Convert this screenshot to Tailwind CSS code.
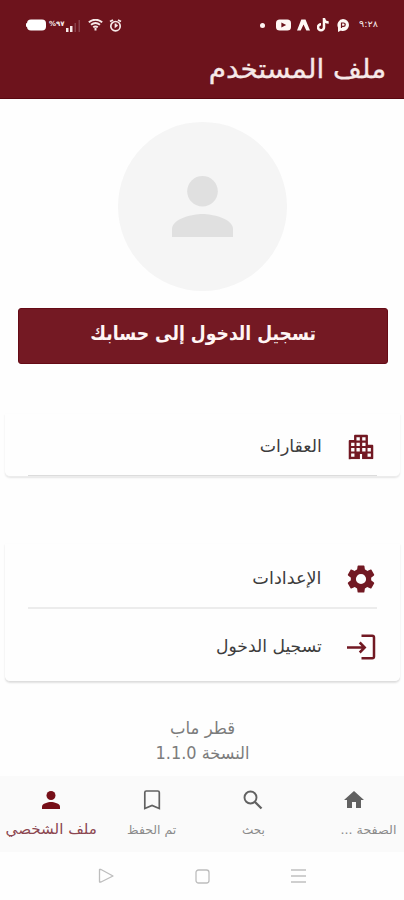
<!DOCTYPE html>
<html lang="ar" dir="rtl">
<head>
<meta charset="utf-8">
<title>ملف المستخدم</title>
<script src="https://cdn.jsdelivr.net/npm/@tailwindcss/browser@4"></script>
</head>
<body class="w-[404px] h-[900px] overflow-hidden bg-[#fefefe] font-['DejaVu_Sans',sans-serif] flex flex-col">
<header class="h-[99px] shrink-0 bg-[#6d131c] border-b border-[#5a0710] text-[#f6e9e8]">
  <div dir="ltr" class="h-[50px] flex items-center pl-[26px] pr-[25px]">
    <svg class="w-5 h-3" viewBox="0 0 20 12"><rect x="1" y="0.5" width="19" height="11" rx="4" fill="#fff"/><rect x="0" y="4" width="2" height="4" rx="1" fill="#fff"/></svg>
    <span class="ml-[3px] w-[15px] text-[7px] leading-none font-bold whitespace-nowrap -mt-px">%٩٧</span>
    <svg class="ml-[1px] mt-[2px] w-4 h-3" viewBox="0 0 16 12"><path d="M1 8h2.5v4H1zM5 6h2.500v6H5z" fill="#f6e9e8"/><path d="M9.500 3H11v9H9.500zM13.500 0H15v12h-1.500z" fill="#88404a"/></svg>
    <svg class="ml-[7px] w-[15px] h-3" viewBox="0 0 15 12" fill="none" stroke="#f6e9e8" stroke-width="1.900"><path d="M.8 3.200Q7.500-1.800 14.200 3.200M3 5.800q4.500-3.500 9 0M5.200 8.300q2.300-1.800 4.600 0"/><path d="M7.500 9v2.500" stroke-width="2"/></svg>
    <svg class="ml-[6px] w-[13px] h-[13px]" viewBox="0 0 13 13" fill="none" stroke="#f6e9e8" stroke-width="1.700"><circle cx="6.500" cy="7.200" r="4.700"/><path d="M1 2.600 4 .9M12 2.600 9 .9M6.500 4.500v3l2-1.500"/></svg>
    <i class="ml-auto w-[5px] h-[5px] rounded-full bg-[#fff4f2]"></i>
    <svg class="ml-[11px] w-[15px] h-[12px]" viewBox="0 0 14 12" preserveAspectRatio="none"><rect y=".5" width="14" height="11" rx="3.500" fill="#fff8f5"/><path d="M5 3.500 9.500 6 5 8.500z" fill="#6d131c"/></svg>
    <svg class="ml-[6px] w-[13px] h-[12px]" viewBox="0 0 13 12"><path d="M0 11.500 4.300.5h4.200L13 11.500H9.300L6.500 5.500 3.700 11.500z" fill="#fff8f5"/></svg>
    <svg class="ml-[7px] w-[12px] h-[14px]" viewBox="0 0 12 14" fill="none" stroke="#fff8f5" stroke-width="2.500"><path d="M7 0v9.300a3 3 0 1 1-3-3M7 1c.5 2.300 2 3.500 4.700 3.500"/></svg>
    <svg class="ml-[8px] w-[12px] h-[13px]" viewBox="0 0 12 13"><path d="M6 0a6 6 0 0 1 0 12c-1 0-1.500-.3-2-.6L1 13V8.500A6 6 0 0 1 6 0z" fill="#fff8f5"/><path d="M4.500 9V4h2a1.700 1.700 0 0 1 0 3.400h-2" fill="none" stroke="#6d131c" stroke-width="1.200"/></svg>
    <span class="ml-[10px] w-[20px] text-[9px] leading-none whitespace-nowrap -mt-px origin-left scale-x-[1.08]">٩:٢٨</span>
  </div>
  <h1 class="mr-[18px] h-[48px] leading-[40px] text-[25px] whitespace-nowrap"><span class="inline-block origin-right scale-x-[1.115] scale-y-[1.06] [-webkit-text-stroke:0.3px_#f6e9e8]">ملف المستخدم</span></h1>
</header>
<main class="h-[677px] shrink-0 flex flex-col items-center">
  <div class="mt-[23px] w-[169px] h-[169px] shrink-0 rounded-full bg-[#f5f5f5] flex justify-center">
    <svg class="mt-[54px] w-[61px] h-[61px]" viewBox="0 0 61 61" fill="#e0e0e0"><circle cx="30.500" cy="15.300" r="15.300"/><path d="M0 61V53C0 43 20 38 30.500 38S61 43 61 53v8z"/></svg>
  </div>
  <button class="mt-[17px] ml-px w-[370px] h-[56px] shrink-0 rounded-[3px] bg-[#741923] border border-[#650b16] text-[#fff5f4] font-bold text-[18px] leading-[50px] pb-1 whitespace-nowrap"><span class="inline-block translate-x-px scale-x-[0.955] scale-y-[1.08]">تسجيل الدخول إلى حسابك</span></button>
  <section class="mt-[50px] ml-px w-[395px] h-[63px] shrink-0 rounded-b-[5px] border-b border-[#ececec] shadow-[0_1px_2px_rgba(0,0,0,0.1)] bg-[#fefefe] flex flex-col px-[23px]">
    <div class="flex items-center h-[62px] border-b border-[#dcdcdc] pt-[5px]">
      <svg class="w-[32px] h-[32px]" viewBox="0 0 24 24"><path fill="#721923" stroke="#721923" stroke-width="1.400" stroke-linejoin="round" d="M16.500 11V3.500h-9v4h-4v17h0V20.500h7.500v-3.500h2v3.500h7.500V11z" /><path fill="#fefefe" d="M2 21.200h20V25H2zM11.200 17.300h1.600V22h-1.600zM8.600 4.700h2.500v2.500H8.600zM12.900 4.700h2.500v2.500h-2.500zM4.600 8.800h2.500v2.500H4.600zM8.600 8.800h2.500v2.500H8.600zM12.900 8.800h2.500v2.500h-2.500zM4.600 12.800h2.500v2.500H4.600zM8.600 12.800h2.500v2.500H8.600zM12.900 12.800h2.500v2.500h-2.500zM16.900 12.800h2.500v2.500h-2.500zM4.600 16.800h2.500v2.500H4.600zM16.900 16.800h2.500v2.500h-2.500z"/></svg>
      <span class="mr-[23px] text-[17px] text-[#3c3c3c] whitespace-nowrap origin-right scale-x-[1.02]">العقارات</span>
    </div>
  </section>
  <section class="mt-[67px] ml-px w-[395px] h-[138px] shrink-0 rounded-b-[5px] border-b border-[#dedede] shadow-[0_1px_2px_rgba(0,0,0,0.12)] bg-[#fefefe] flex flex-col px-[23px]">
    <div class="flex items-center h-[65px] border-b-2 border-[#ececec] pt-[7px]">
      <svg class="w-[34px] h-[34px] -mr-[1px]" viewBox="0 0 24 24" fill="#721923"><path d="M19.140 12.940c.04-.3.060-.61.060-.94 0-.32-.02-.64-.07-.94l2.030-1.580c.18-.14.230-.41.120-.61l-1.920-3.320c-.12-.22-.37-.29-.59-.22l-2.390.96c-.5-.38-1.030-.7-1.620-.94l-.36-2.540c-.04-.24-.24-.41-.48-.41h-3.840c-.24 0-.43.170-.47.410l-.36 2.540c-.59.240-1.130.570-1.620.940l-2.390-.96c-.22-.08-.47 0-.59.220L2.740 8.870c-.12.210-.08.470.120.610l2.030 1.580c-.05.3-.09.630-.09.940s.02.640.070.940l-2.030 1.580c-.18.140-.23.410-.12.610l1.920 3.320c.12.220.370.290.590.220l2.390-.96c.5.380 1.030.7 1.620.940l.36 2.540c.05.240.240.410.480.410h3.840c.24 0 .44-.17.470-.41l.36-2.540c.59-.24 1.130-.56 1.620-.94l2.390.96c.22.080.470 0 .59-.22l1.920-3.320c.12-.22.070-.47-.12-.61zM12 15.600A3.600 3.600 0 1 1 12 8.400a3.600 3.600 0 0 1 0 7.200z"/></svg>
      <span class="mr-[22px] text-[17px] text-[#3c3c3c] whitespace-nowrap origin-right scale-x-[1.04]">الإعدادات</span>
    </div>
    <div class="flex items-center h-[72px] pt-[4px]">
      <svg class="w-[30px] h-[28px]" viewBox="0 0 30 28" fill="none" stroke="#721923" stroke-width="2.500"><path d="M14.500 2.700h10.700Q27 2.700 27 4.500v19q0 1.800-1.800 1.800H14.500M0 14.500h17.500M12.700 9.500l5 5-5 5"/></svg>
      <span class="mr-[25px] text-[17px] text-[#3c3c3c] whitespace-nowrap origin-right scale-x-[1.01]">تسجيل الدخول</span>
    </div>
  </section>
  <div class="mt-[34px] ml-px text-center text-[17px] leading-[25px] text-[#7c7c7c] whitespace-nowrap">
    <p><span class="inline-block scale-x-[0.97]">قطر ماب</span></p>
    <p><span class="inline-block scale-x-[0.95]">النسخة 1.1.0</span></p>
  </div>
</main>
<nav class="h-[76px] shrink-0 bg-[#fafafa] grid grid-cols-4 text-[12px] text-[#8a8a8a] text-center whitespace-nowrap">
  <div class="flex flex-col items-center pt-3"><svg class="w-6 h-6" viewBox="0 0 24 24" fill="#616161"><path d="M10 20v-6h4v6h5v-8h3L12 3 2 12h3v8z"/></svg><span class="leading-[36px] translate-x-[15px] scale-x-[1.06]">الصفحة ...</span></div>
  <div class="flex flex-col items-center pt-3"><svg class="w-6 h-6" viewBox="0 0 24 24" fill="none" stroke="#616161" stroke-width="1.900"><circle cx="9.500" cy="9.500" r="6"/><path d="m14 14 6.500 6.500" stroke-width="2.300"/></svg><span class="leading-[36px] translate-x-px">بحث</span></div>
  <div class="flex flex-col items-center pt-3"><svg class="w-6 h-6" viewBox="0 0 24 24" fill="none" stroke="#616161" stroke-width="1.700"><path d="M4.800 20.500V4.500Q4.800 3 6.300 3h11.500Q19.300 3 19.300 4.500v16l-7.250-3z"/></svg><span class="leading-[36px] scale-x-[1.04]">تم الحفظ</span></div>
  <div class="flex flex-col items-center pt-3 text-[#8b4650]"><svg class="w-6 h-6" viewBox="0 0 24 24" fill="#760f18"><circle cx="12" cy="7.500" r="4.500"/><path d="M3 21v-2.500C3 15.500 9 14 12 14s9 1.500 9 4.500V21z"/></svg><span class="text-[14px] leading-[34px] translate-x-px scale-x-[1.08]">ملف الشخصي</span></div>
</nav>
<footer class="flex-1 flex justify-center items-center gap-[81px]">
  <svg class="w-[15px] h-[16px]" viewBox="0 0 15 16" stroke="#cfcfcf" stroke-width="1.800"><path d="M0 2h15M0 8h15M0 14h15"/></svg>
  <svg class="w-[15px] h-[15px]" viewBox="0 0 15 15" fill="none" stroke="#bdbdbd" stroke-width="1.300"><rect x="1" y="1" width="13" height="13" rx="2.500"/></svg>
  <svg class="w-[16px] h-[16px]" viewBox="0 0 16 16" fill="none" stroke="#bdbdbd" stroke-width="1.300" stroke-linejoin="round"><path d="M1.500 1.500v12.500h1.500L15 8 3 1.500z"/></svg>
</footer>
</body>
</html>
